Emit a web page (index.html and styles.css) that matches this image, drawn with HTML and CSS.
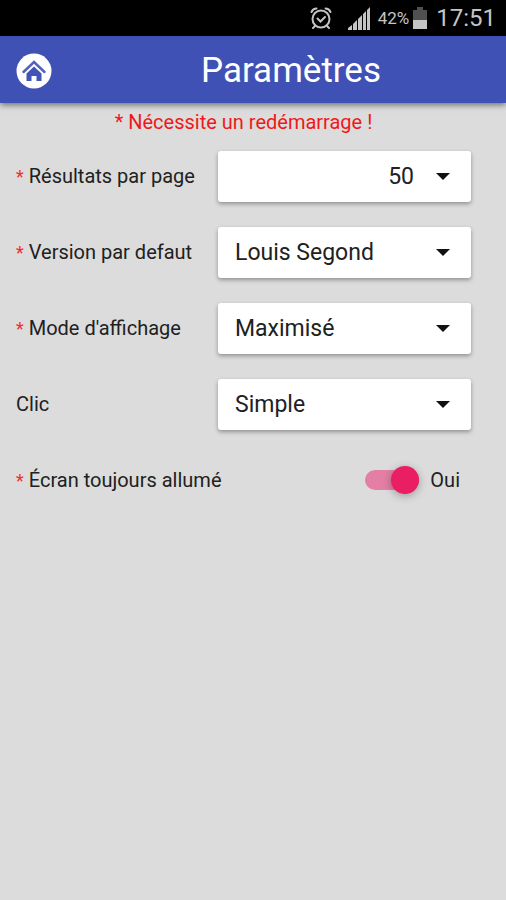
FILE: index.html
```html
<!DOCTYPE html>
<html lang="fr">
<head>
<meta charset="utf-8">
<meta name="viewport" content="width=device-width, initial-scale=1">
<title>Paramètres</title>
<link rel="stylesheet" href="styles.css">
</head>
<body>
<div class="status">
  <svg class="alarm" viewBox="0 0 22 24" width="22" height="24" aria-hidden="true">
    <circle cx="11" cy="13" r="8.5"/>
    <path d="M1.5 6Q3 2.500 6.500 2.500M20.500 6Q19 2.500 15.500 2.500M7.500 12.500l3 3 4.500-4.500M5 20l-2 2M17 20l2 2"/>
  </svg>
  <svg class="signal" viewBox="0 0 24 24" width="24" height="24" aria-hidden="true">
    <path d="M1 24v-2l4-3v5zM6 24v-6l4-4v10zM11 24V13l4-4v15zM16 24V8l3-3v19zM20 24V4l3-3v23z"/>
  </svg>
  <span class="percent">42%</span>
  <svg class="battery" viewBox="0 0 16 24" width="16" height="24" aria-hidden="true">
    <path class="empty" d="M5 1h6v3h4v11H1V4h4z"/>
    <path class="full" d="M1 14h14v9H1z"/>
  </svg>
  <span class="time">17:51</span>
</div>
<header class="bar">
  <a class="home" href="#" aria-label="Accueil">
    <svg viewBox="0 0 36 36" width="36" height="36" aria-hidden="true">
      <circle cx="18" cy="18" r="17.500" fill="#fff"/>
      <path d="M7.500 19L18 9l10.500 10" fill="none" stroke="#5362ba" stroke-width="2.500" stroke-linecap="round"/>
      <path d="M10.500 20.500l7.500-7 7.500 7V28h-5v-5h-5v5h-5z" fill="#4254b5"/>
    </svg>
  </a>
  <h1 class="title">Paramètres</h1>
</header>
<main>
  <p class="notice">* Nécessite un redémarrage !</p>
  <form class="settings">
    <div class="row">
      <label for="results"><span class="star">*</span> Résultats par page</label>
      <div class="field">
        <select id="results" class="number"><option>50</option></select>
      </div>
    </div>
    <div class="row">
      <label for="version"><span class="star">*</span> Version par defaut</label>
      <div class="field">
        <select id="version"><option>Louis Segond</option></select>
      </div>
    </div>
    <div class="row">
      <label for="mode"><span class="star">*</span> Mode d'affichage</label>
      <div class="field">
        <select id="mode"><option>Maximisé</option></select>
      </div>
    </div>
    <div class="row">
      <label for="click">Clic</label>
      <div class="field">
        <select id="click"><option>Simple</option></select>
      </div>
    </div>
    <div class="row row-switch">
      <label for="screen"><span class="star">*</span> Écran toujours allumé</label>
      <div class="switch">
        <input id="screen" type="checkbox" role="switch" checked>
        <span>Oui</span>
      </div>
    </div>
  </form>
</main>
</body>
</html>
```
FILE: styles.css
```css
* { box-sizing: border-box; }

body {
  margin: 0;
  min-height: 100vh;
  background: #dcdcdc;
  color: #212121;
  font: 20px/24px Roboto, sans-serif;
}

.status {
  display: flex;
  align-items: center;
  justify-content: flex-end;
  height: 36px;
  padding-right: 10px;
  background: #000;
  color: #c4c4c4;
}

.alarm {
  margin-right: 15px;
  fill: none;
  stroke: #c4c4c4;
  stroke-width: 2;
  stroke-linecap: round;
}

.signal { margin-right: 7px; fill: #c4c4c4; }
.percent { margin-right: 3px; font-size: 17px; }
.battery { margin-right: 8px; }
.empty { fill: #505050; }
.full { fill: #c4c4c4; }
.time { font-size: 24px; }

.bar {
  display: grid;
  grid-template-columns: 36px 1fr 36px;
  align-items: center;
  height: 67px;
  padding: 2px 16px 0;
  background: #4051b5;
  color: #fff;
  box-shadow: 0 2px 6px rgba(0, 0, 0, .5);
}

.home { display: block; height: 36px; }

.title {
  margin: 0 0 0 76px;
  text-align: center;
  font-weight: 400;
  font-size: 35px;
  line-height: 44px;
}

.notice {
  margin: 0;
  padding: 7px 35px 4px 16px;
  text-align: center;
  line-height: 24px;
  color: #f01818;
}

.settings { padding: 0 35px 0 16px; }

.row {
  display: grid;
  grid-template-columns: 202px 1fr;
  align-items: center;
  height: 76px;
}

.row-switch { grid-template-columns: 1fr auto; }

label { white-space: nowrap; }

.star { color: #f42c2c; font-size: 18px; }

.field { display: grid; align-items: center; }

.field::after {
  content: "";
  grid-area: 1 / 1;
  justify-self: end;
  margin-right: 21px;
  border: 7px solid transparent;
  border-top-color: #111;
  border-bottom: 0;
  pointer-events: none;
}

select {
  grid-area: 1 / 1;
  appearance: none;
  width: 100%;
  height: 51px;
  padding: 2px 57px 0 17px;
  border: 0;
  border-radius: 3px;
  background: #fff;
  color: #212121;
  font: inherit;
  font-size: 23px;
  box-shadow: 0 2px 4px rgba(0, 0, 0, .35);
}

.number { text-align-last: right; }

.switch {
  display: flex;
  align-items: center;
  gap: 11px;
  padding-right: 11px;
}

.switch input {
  appearance: none;
  display: flex;
  align-items: center;
  justify-content: flex-end;
  width: 54px;
  height: 20px;
  margin: 0;
  border-radius: 10px;
  background: #e37fa4;
}

.switch input::before {
  content: "";
  width: 28px;
  height: 28px;
  border-radius: 50%;
  background: #e91e63;
  box-shadow: 0 2px 8px rgba(0, 0, 0, .3);
}

.switch input:not(:checked) { justify-content: flex-start; background: #aaa; }
.switch input:not(:checked)::before { background: #fafafa; }
```
